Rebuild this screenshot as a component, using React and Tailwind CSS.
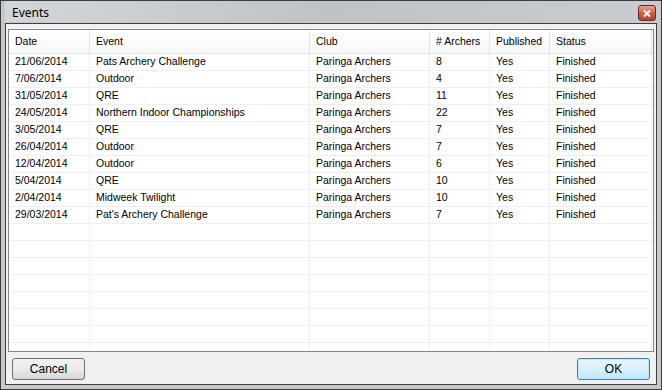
import React from "react";

const COLS = [
  { key: "date", label: "Date", w: "w-[81px]" },
  { key: "event", label: "Event", w: "w-[220px]" },
  { key: "club", label: "Club", w: "w-[120px]" },
  { key: "archers", label: "# Archers", w: "w-[60px]" },
  { key: "published", label: "Published", w: "w-[60px]" },
  { key: "status", label: "Status", w: "w-[102px]" },
];

const EVENTS = [
  ["21/06/2014", "Pats Archery Challenge", "Paringa Archers", "8", "Yes", "Finished"],
  ["7/06/2014", "Outdoor", "Paringa Archers", "4", "Yes", "Finished"],
  ["31/05/2014", "QRE", "Paringa Archers", "11", "Yes", "Finished"],
  ["24/05/2014", "Northern Indoor Championships", "Paringa Archers", "22", "Yes", "Finished"],
  ["3/05/2014", "QRE", "Paringa Archers", "7", "Yes", "Finished"],
  ["26/04/2014", "Outdoor", "Paringa Archers", "7", "Yes", "Finished"],
  ["12/04/2014", "Outdoor", "Paringa Archers", "6", "Yes", "Finished"],
  ["5/04/2014", "QRE", "Paringa Archers", "10", "Yes", "Finished"],
  ["2/04/2014", "Midweek Twilight", "Paringa Archers", "10", "Yes", "Finished"],
  ["29/03/2014", "Pat's Archery Challenge", "Paringa Archers", "7", "Yes", "Finished"],
];

// pad out with blank rows so the grid lines run to the bottom
const ROWS = [...EVENTS, ...Array.from({ length: 9 }, () => ["", "", "", "", "", ""])];

const App = () => {
  return (
    <div className="w-[662px] h-[390px] overflow-hidden flex flex-col bg-[#c5c9ce] border border-[#3c3c3c] px-[4px] pb-[4px] font-['Liberation_Sans',Arial,sans-serif] text-black">
      {/* ---------- TITLE BAR ---------- */}
      <div className="h-[21px] shrink-0 flex items-center justify-between pl-[7px] pr-[1px] bg-gradient-to-r from-[#d3d6d9] via-[#bfc3c7] to-[#c9ccd0]">
        <span className="text-[12px] font-['Noto_Sans',sans-serif] leading-none pt-[2px]">Events</span>
        <div className="w-[18px] h-[16px] mt-[3px] rounded-[3px] border border-[#6b2a22] bg-gradient-to-b from-[#e8a08f] via-[#d2604a] to-[#b8402c] flex items-center justify-center">
          <svg width="8" height="7" viewBox="0 0 8 7">
            <path d="M1 0.5 L7 6.5 M7 0.5 L1 6.5" stroke="#fff" strokeWidth="2" />
          </svg>
        </div>
      </div>

      {/* ---------- DIALOG BODY ---------- */}
      <div className="flex-1 min-h-0 flex flex-col bg-[#f0f0f0] border border-[#404040] mt-[1px] px-[2px] pt-[5px] pb-[4px]">
        {/* ---------- GRID ---------- */}
        <div className="flex-1 min-h-0 border border-[#828790] bg-white overflow-hidden text-[10.5px]">
          <div className="flex h-[24px] border-b border-[#e5e5e5] bg-gradient-to-b from-white to-[#f7f8f9]">
            {COLS.map((c) => (
              <div key={c.key} className={`${c.w} shrink-0 flex items-center pl-[6px] border-r border-[#e5e5e5]`}>
                {c.label}
              </div>
            ))}
          </div>
          {ROWS.map((row, i) => (
            <div key={i} className="flex h-[17px] border-b border-[#f0f0f0]">
              {row.map((cell, j) => (
                <div key={j} className={`${COLS[j].w} shrink-0 flex items-center pl-[6px] border-r border-[#f0f0f0] whitespace-nowrap`}>
                  {cell}
                </div>
              ))}
            </div>
          ))}
        </div>

        {/* ---------- BUTTONS ---------- */}
        <div className="h-[22px] shrink-0 mt-[6px] flex justify-between px-[4px] text-[12px]">
          <button className="w-[73px] h-[22px] rounded-[3px] border border-[#707070] bg-gradient-to-b from-[#f2f2f2] via-[#ebebeb] to-[#d6d6d6]">
            Cancel
          </button>
          <button className="w-[73px] h-[22px] rounded-[3px] border border-[#3c7fb1] bg-gradient-to-b from-[#eaf6fd] via-[#d9f0fc] to-[#bee6fd] shadow-[inset_0_0_0_1px_#c4e5f6]">
            OK
          </button>
        </div>
      </div>
    </div>
  );
};

export default App;
